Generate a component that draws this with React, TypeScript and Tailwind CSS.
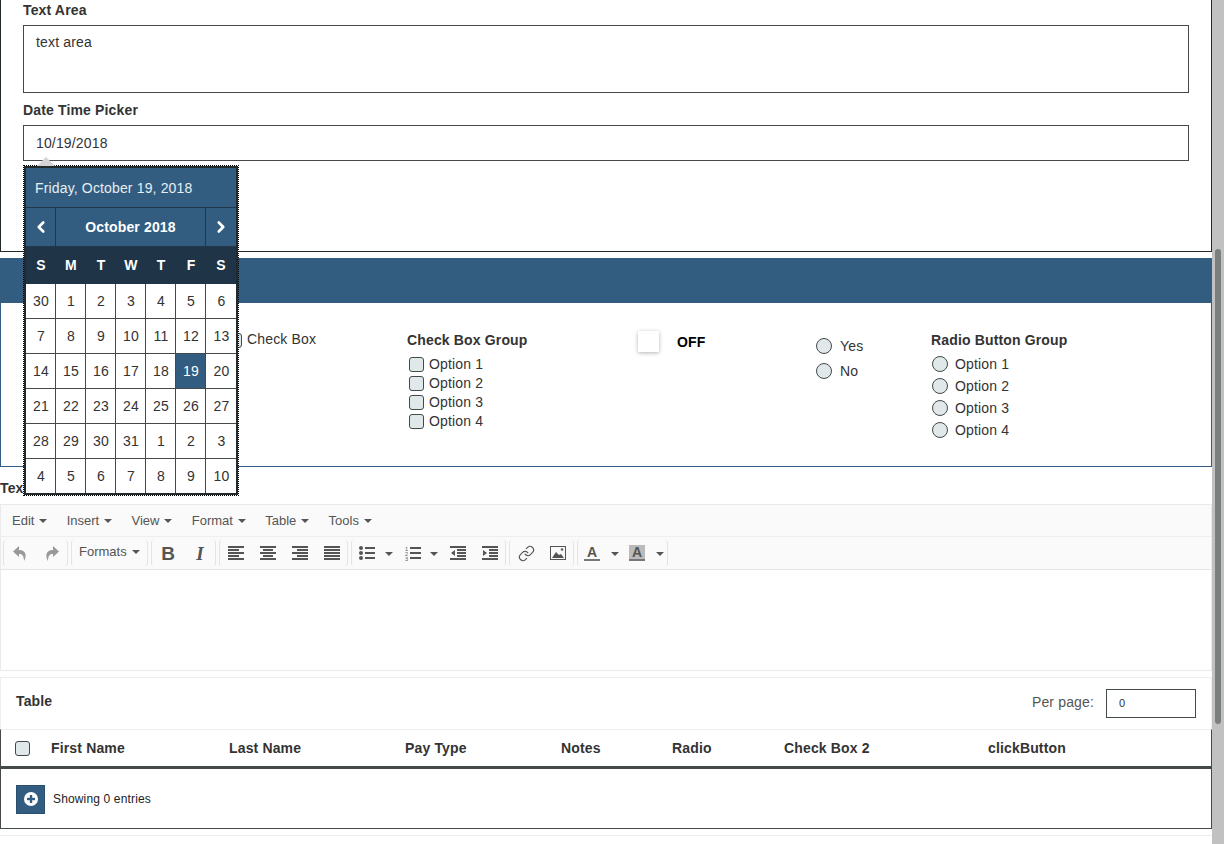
import { ChevronLeft, ChevronRight, Link } from 'lucide-react'
import type { ReactNode } from 'react'

var weeks = [
  [30, 1, 2, 3, 4, 5, 6],
  [7, 8, 9, 10, 11, 12, 13],
  [14, 15, 16, 17, 18, 19, 20],
  [21, 22, 23, 24, 25, 26, 27],
  [28, 29, 30, 31, 1, 2, 3],
  [4, 5, 6, 7, 8, 9, 10],
]

function Caret() {
  return <span className="inline-block ml-[5px] align-middle w-0 h-0 border-x-[4px] border-x-transparent border-t-[4px] border-t-[#555]" />
}

function Group({ w, children }: { w: string; children?: ReactNode }) {
  return <div className={w + ' h-[26px] shrink-0 border-x border-[#e2e4e7] rounded-[3px] flex items-center mr-[3px]'}>{children}</div>
}

function Btn({ children }: { children: ReactNode }) {
  return <div className="w-[32px] flex items-center justify-center shrink-0">{children}</div>
}

function Lines({ kind }: { kind: string }) {
  var short = kind === 'left' ? [0, 11] : kind === 'center' ? [3, 10] : kind === 'right' ? [5, 11] : [0, 16]
  return (
    <svg width="16" height="14" viewBox="0 0 16 14" fill="#555">
      <rect x="0" y="0" width="16" height="2" />
      <rect x={short[0]} y="3" width={short[1]} height="2" />
      <rect x="0" y="6" width="16" height="2" />
      <rect x={short[0]} y="9" width={short[1]} height="2" />
      <rect x="0" y="12" width="16" height="2" />
    </svg>
  )
}

function CheckBox() {
  return <span className="w-[15px] h-[15px] rounded-[3px] border border-[#44494a] bg-[#e0e8e9] shrink-0" />
}

function Radio() {
  return <span className="w-[16px] h-[16px] rounded-full border border-[#44494a] bg-[#e0e8e9] shrink-0" />
}

function DatePicker() {
  return (
    <div className="absolute left-[23px] top-[165px] z-10 border border-dotted border-black">
      <span className="absolute left-[13px] top-[-9px] w-0 h-0 border-x-[9px] border-x-transparent border-b-[9px] border-b-[#d4d4d4]" />
      <div className="w-[214px] border-2 border-[#22292b] bg-white">
        <div className="h-[40px] pt-[1px] bg-[#325d81] text-[#e8eef3] flex items-center pl-[9px] border-b border-[#22384a]">Friday, October 19, 2018</div>
        <div className="h-[39px] bg-[#325d81] text-white flex items-center font-bold border-b border-[#22384a]">
          <div className="w-[30px] h-full flex items-center justify-center border-r border-[#22384a]"><ChevronLeft size={18} strokeWidth={3.5} /></div>
          <div className="flex-1 text-center">October 2018</div>
          <div className="w-[31px] h-full flex items-center justify-center border-l border-[#22384a]"><ChevronRight size={18} strokeWidth={3.5} /></div>
        </div>
        <div className="h-[37px] bg-[#1f3447] text-white font-bold grid grid-cols-7 items-center text-center">
          {['S', 'M', 'T', 'W', 'T', 'F', 'S'].map(function(d, i) { return <span key={i}>{d}</span> })}
        </div>
        {weeks.map(function(w, i) {
          return (
            <div key={i} className={'grid grid-cols-7 text-[#333] text-center ' + (i > 0 ? 'h-[35px] border-t border-[#44494a]' : 'h-[34px]')}>
              {w.map(function(d, j) {
                var on = d === 19
                return (
                  <span key={j} className={'flex items-center justify-center pl-[1px] ' + (j < 6 ? 'border-r border-[#44494a] ' : '') + (on ? 'bg-[#325d81] text-white' : '')}>{d}</span>
                )
              })}
            </div>
          )
        })}
      </div>
    </div>
  )
}

export default function App() {
  var menus = ['Edit', 'Insert', 'View', 'Format', 'Table', 'Tools']
  var columns = [
    { name: 'First Name', w: 'w-[178px]' },
    { name: 'Last Name', w: 'w-[176px]' },
    { name: 'Pay Type', w: 'w-[156px]' },
    { name: 'Notes', w: 'w-[111px]' },
    { name: 'Radio', w: 'w-[112px]' },
    { name: 'Check Box 2', w: 'w-[204px]' },
    { name: 'clickButton', w: 'w-[150px]' },
  ]
  return (
    <div className="h-[844px] overflow-hidden flex bg-white text-[14px] tracking-[0.15px] text-[#333] font-['Liberation_Sans',Arial,sans-serif] relative">
      <div className="w-[1212px] shrink-0">
        <div className="h-[252px] border-x border-b border-[#22292b] px-[22px]">
          <div className="h-[25px] pt-[2px] font-bold leading-[16px]">Text Area</div>
          <div className="h-[68px] border border-[#44494a] px-[12px] pt-[6px]">text area</div>
          <div className="mt-[9px] h-[23px] font-bold leading-[16px]">Date Time Picker</div>
          <div className="h-[36px] border border-[#44494a] px-[12px] flex items-center">10/19/2018</div>
        </div>

        <div className="mt-[6px] h-[45px] bg-[#325d81]" />
        <div className="h-[164px] border-x border-b border-[#325d81] flex relative">
          <div className="w-[246px] pt-[30px] pl-[226px] whitespace-nowrap flex items-start gap-[5px]">
            <CheckBox />
            <span className="leading-[16px] -mt-[2px]">Check Box</span>
          </div>
          <div className="ml-[160px] w-[231px] pt-[29px]">
            <div className="font-bold leading-[16px] mb-[7px]">Check Box Group</div>
            {['Option 1', 'Option 2', 'Option 3', 'Option 4'].map(function(o) {
              return <div key={o} className="h-[19px] pl-[2px] flex items-center gap-[5px]"><CheckBox />{o}</div>
            })}
          </div>
          <div className="w-[178px] pt-[28px] flex">
            <span className="w-[21px] h-[21px] bg-white shadow-[0_1px_4px_rgba(0,0,0,0.3)]" />
            <span className="ml-[18px] mt-[2px] text-black font-bold leading-[18px]">OFF</span>
          </div>
          <div className="w-[115px] pt-[30px]">
            <div className="h-[25px] flex items-center gap-[8px]"><Radio /><span className="mt-[1px]">Yes</span></div>
            <div className="h-[25px] flex items-center gap-[8px]"><Radio /><span className="mt-[1px]">No</span></div>
          </div>
          <div className="pt-[29px]">
            <div className="font-bold leading-[16px] mb-[5px]">Radio Button Group</div>
            {['Option 1', 'Option 2', 'Option 3', 'Option 4'].map(function(o) {
              return <div key={o} className="h-[22px] pl-[1px] flex items-center gap-[7px]"><Radio />{o}</div>
            })}
          </div>
        </div>

        <div className="h-[37px] pt-[13px] font-bold leading-[16px]">Text Editor</div>

        <div className="h-[167px] border border-[#e9eaec] text-[13px] tracking-normal text-[#555]">
          <div className="h-[32px] bg-[#fafafa] border-b border-[#eee] flex items-center pl-[11px] gap-[19.3px]">
            {menus.map(function(m) { return <span key={m}>{m}<Caret /></span> })}
          </div>
          <div className="h-[33px] bg-[#fafafa] border-b border-[#e2e4e7] flex items-center pl-[2px] text-[#555]">
            <Group w="w-[65px]">
              <Btn><svg width="14" height="15" viewBox="0 0 14 15" fill="#999"><path d="M6 0 0 5.5 6 11V8c3-.5 5 1.500 5 7 2.500-4 3-11-5-11z" /></svg></Btn>
              <Btn><svg width="14" height="15" viewBox="0 0 14 15" fill="#999"><path d="M8 0l6 5.500L8 11V8c-3-.5-5 1.500-5 7-2.500-4-3-11 5-11z" /></svg></Btn>
            </Group>
            <Group w="w-[77px]">
              <div className="pl-[7px] -mt-[3px]">Formats<Caret /></div>
            </Group>
            <Group w="w-[65px]">
              <Btn><span className="font-bold text-[19px] leading-none">B</span></Btn>
              <Btn><span className="italic font-bold font-['Liberation_Serif'] text-[19px] leading-none">I</span></Btn>
            </Group>
            <Group w="w-[129px]">
              <Btn><Lines kind="left" /></Btn>
              <Btn><Lines kind="center" /></Btn>
              <Btn><Lines kind="right" /></Btn>
              <Btn><Lines kind="full" /></Btn>
            </Group>
            <Group w="w-[155px]">
              <svg className="ml-[7px]" width="16" height="14" viewBox="0 0 16 14" fill="#555"><circle cx="2" cy="2" r="2" /><circle cx="2" cy="7" r="2" /><circle cx="2" cy="12" r="2" /><rect x="6" y="1" width="10" height="2" /><rect x="6" y="6" width="10" height="2" /><rect x="6" y="11" width="10" height="2" /></svg>
              <span className="ml-[5px]"><Caret /></span>
              <svg className="ml-[12px]" width="16" height="15" viewBox="0 0 16 15" fill="#555"><text x="0" y="5" fontSize="5.500">1</text><text x="0" y="10" fontSize="5.500">2</text><text x="0" y="15" fontSize="5.500">3</text><rect x="5" y="1" width="11" height="2" /><rect x="5" y="6" width="11" height="2" /><rect x="5" y="11" width="11" height="2" /></svg>
              <span className="ml-[4px]"><Caret /></span>
              <svg className="ml-[12px]" width="16" height="14" viewBox="0 0 16 14" fill="#555"><rect x="0" y="0" width="16" height="2" /><rect x="7" y="3" width="9" height="2" /><rect x="7" y="6" width="9" height="2" /><rect x="7" y="9" width="9" height="2" /><rect x="0" y="12" width="16" height="2" /><path d="M5 4v6L1 7z" /></svg>
              <svg className="ml-[16px]" width="16" height="14" viewBox="0 0 16 14" fill="#555"><rect x="0" y="0" width="16" height="2" /><rect x="7" y="3" width="9" height="2" /><rect x="7" y="6" width="9" height="2" /><rect x="7" y="9" width="9" height="2" /><rect x="0" y="12" width="16" height="2" /><path d="M1 4v6l4-3z" /></svg>
            </Group>
            <Group w="w-[65px]">
              <Btn><Link size={17} strokeWidth={1.6} color="#555" /></Btn>
              <Btn><svg width="16" height="14" viewBox="0 0 16 14"><rect x="0.5" y="0.5" width="15" height="13" fill="none" stroke="#555" /><path d="M2 12l4-6 3 3 2-1 3 4z" fill="#555" /><circle cx="12" cy="3.500" r="1.200" fill="#555" /></svg></Btn>
            </Group>
            <Group w="w-[91px]">
              <span className="ml-[6px] w-[16px] h-[16px] text-center font-bold text-[14px] leading-[14px] border-b-2 border-[#777]">A</span>
              <span className="ml-[6px]"><Caret /></span>
              <span className="ml-[10px] w-[16px] h-[16px] bg-[#bbb] text-center font-bold text-[14px] leading-[14px] border-b-2 border-[#777]">A</span>
              <span className="ml-[6px]"><Caret /></span>
            </Group>
          </div>
        </div>

        <div className="mt-[6px] h-[52px] border-t border-x border-[#eee] flex items-center justify-between px-[15px]">
          <span className="font-bold -mt-[5px]">Table</span>
          <div className="flex items-center gap-[12px]">
            <span className="text-[#555] -mt-[3px]">Per page:</span>
            <div className="w-[90px] h-[29px] border border-[#44494a] pl-[12px] text-[11px] flex items-center">0</div>
          </div>
        </div>
        <div className="h-[37px] border-t border-[#eee] border-x border-x-[#44494a] flex items-center pl-[14px] font-bold">
          <span className="w-[15px] h-[15px] rounded-[3px] border border-[#44494a] bg-[#e0e8e9] mr-[21px]" />
          {columns.map(function(c) {
            return <span key={c.name} className={c.w + ' shrink-0'}>{c.name}</span>
          })}
        </div>
        <div className="h-[63px] pt-[1px] border-t-[3px] border-t-[#44494a] border-x border-b border-x-[#44494a] border-b-[#44494a] flex items-center pl-[15px]">
          <span className="w-[29px] h-[29px] bg-[#325d81] border border-[#2a4f6e] flex items-center justify-center">
            <svg width="14" height="14" viewBox="0 0 14 14"><circle cx="7" cy="7" r="7" fill="#fff" /><rect x="3" y="5.800" width="8" height="2.400" fill="#325d81" /><rect x="5.800" y="3" width="2.400" height="8" fill="#325d81" /></svg>
          </span>
          <span className="ml-[8px] text-[12px] text-[#222]">Showing 0 entries</span>
        </div>
        <div className="mt-[6px] border-t border-[#eee]" />
      </div>

      <div className="w-[12px] shrink-0 bg-[#c1c1c1] flex justify-center">
        <div className="mt-[249px] w-[6px] h-[475px] rounded-full bg-[#7b7f80]" />
      </div>

      <DatePicker />
    </div>
  )
}
